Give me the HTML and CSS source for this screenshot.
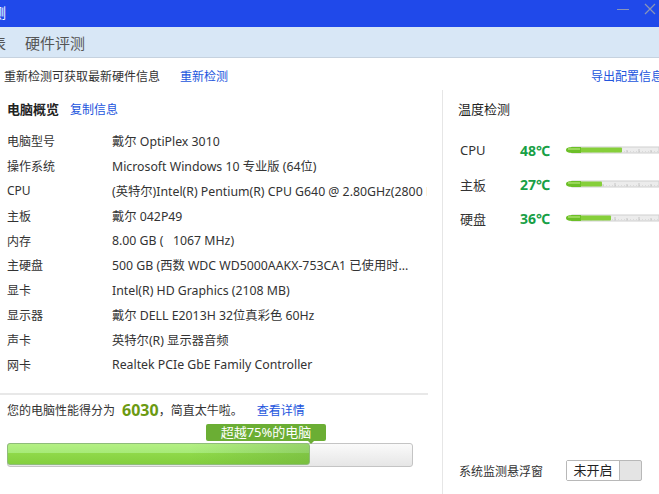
FILE: index.html
```html
<!DOCTYPE html>
<html lang="zh-CN">
<head>
    <meta charset="UTF-8">
    <title>硬件评测</title>
    <link rel="stylesheet" href="styles.css">
</head>
<body>
    <div class="titulo">
        <span class="titulo-texto">检测</span>
        <div class="ventana">
            <span class="minimizar"></span>
            <svg class="cerrar" width="12" height="12" viewBox="0 0 12 12"><path d="M1 1L11 11M11 1L1 11" stroke="#8a95b8" stroke-width="1.2"/></svg>
        </div>
    </div>
    <div class="pestanas">
        <span class="pestana cortada">硬件概表</span>
        <span class="pestana">硬件评测</span>
    </div>
    <div class="barra">
        <span>重新检测可获取最新硬件信息</span>
        <a class="enlace recheck">重新检测</a>
        <a class="enlace exportar">导出配置信息</a>
    </div>
    <div class="principal">
        <div class="izquierda">
            <div class="cabecera"><b>电脑概览</b><a class="enlace">复制信息</a></div>
            <div class="fila"><span class="clave">电脑型号</span><span class="valor">戴尔 OptiPlex 3010</span></div>
            <div class="fila"><span class="clave">操作系统</span><span class="valor">Microsoft Windows 10 专业版 (64位)</span></div>
            <div class="fila"><span class="clave">CPU</span><span class="valor">(英特尔)Intel(R) Pentium(R) CPU G640 @ 2.80GHz(2800 MHz)</span></div>
            <div class="fila"><span class="clave">主板</span><span class="valor">戴尔 042P49</span></div>
            <div class="fila"><span class="clave">内存</span><span class="valor">8.00 GB ( &nbsp; 1067 MHz)</span></div>
            <div class="fila"><span class="clave">主硬盘</span><span class="valor">500 GB (西数 WDC WD5000AAKX-753CA1 已使用时...</span></div>
            <div class="fila"><span class="clave">显卡</span><span class="valor">Intel(R) HD Graphics (2108 MB)</span></div>
            <div class="fila"><span class="clave">显示器</span><span class="valor">戴尔 DELL E2013H 32位真彩色 60Hz</span></div>
            <div class="fila"><span class="clave">声卡</span><span class="valor">英特尔(R) 显示器音频</span></div>
            <div class="fila"><span class="clave">网卡</span><span class="valor">Realtek PCIe GbE Family Controller</span></div>

            <div class="puntos">
                <span>您的电脑性能得分为</span><b class="nota">6030</b><span>，简直太牛啦。</span>
                <a class="enlace">查看详情</a>
            </div>
            <div class="progreso">
                <div class="relleno" style="width: 75%"></div>
                <span class="globo">超越75%的电脑</span>
            </div>
        </div>
        <div class="derecha">
            <div class="cabecera">温度检测</div>
            <div class="temp"><span class="clave">CPU</span><b class="grados">48℃</b>
                <svg class="termo" width="94" height="12" viewBox="0 0 94 12">
                    <rect x="7" y="3" width="87" height="6" fill="#ececec" stroke="#cfcfcf"/>
                    <path d="M14 7.5h80" stroke="#b8b8b8" stroke-width="0.6" stroke-dasharray="0.6 2.4"/>
                    <path d="M14 8.5V6M26 8.5V5M38 8.5V6M50 8.5V5M62 8.5V6M74 8.5V5M86 8.5V6" stroke="#b0b0b0" stroke-width="0.6"/>
                    <rect x="8" y="3.5" width="49" height="5" rx="1" fill="#86cf3a"/>
                    <path d="M1 6c0-2.3 3-3 7-3h8v6H8C4 9 1 8.3 1 6z" fill="#6cbf28"/>
                    <path d="M3 5h12" stroke="#c6f08a" stroke-width="1"/>
                </svg>
            </div>
            <div class="temp"><span class="clave">主板</span><b class="grados">27℃</b>
                <svg class="termo" width="94" height="12" viewBox="0 0 94 12">
                    <rect x="7" y="3" width="87" height="6" fill="#ececec" stroke="#cfcfcf"/>
                    <path d="M14 7.5h80" stroke="#b8b8b8" stroke-width="0.6" stroke-dasharray="0.6 2.4"/>
                    <path d="M14 8.5V6M26 8.5V5M38 8.5V6M50 8.5V5M62 8.5V6M74 8.5V5M86 8.5V6" stroke="#b0b0b0" stroke-width="0.6"/>
                    <rect x="8" y="3.5" width="29" height="5" rx="1" fill="#86cf3a"/>
                    <path d="M1 6c0-2.3 3-3 7-3h8v6H8C4 9 1 8.3 1 6z" fill="#6cbf28"/>
                    <path d="M3 5h12" stroke="#c6f08a" stroke-width="1"/>
                </svg>
            </div>
            <div class="temp"><span class="clave">硬盘</span><b class="grados">36℃</b>
                <svg class="termo" width="94" height="12" viewBox="0 0 94 12">
                    <rect x="7" y="3" width="87" height="6" fill="#ececec" stroke="#cfcfcf"/>
                    <path d="M14 7.5h80" stroke="#b8b8b8" stroke-width="0.6" stroke-dasharray="0.6 2.4"/>
                    <path d="M14 8.5V6M26 8.5V5M38 8.5V6M50 8.5V5M62 8.5V6M74 8.5V5M86 8.5V6" stroke="#b0b0b0" stroke-width="0.6"/>
                    <rect x="8" y="3.5" width="38" height="5" rx="1" fill="#86cf3a"/>
                    <path d="M1 6c0-2.3 3-3 7-3h8v6H8C4 9 1 8.3 1 6z" fill="#6cbf28"/>
                    <path d="M3 5h12" stroke="#c6f08a" stroke-width="1"/>
                </svg>
            </div>
            <div class="flotante">
                <span>系统监测悬浮窗</span>
                <div class="interruptor"><span class="estado">未开启</span><span class="pomo"></span></div>
            </div>
        </div>
    </div>
</body>
</html>
```

FILE: styles.css
```css
*{
    margin: 0;
    padding: 0;
    box-sizing: border-box;
}
body{
    width: 659px;
    height: 494px;
    overflow: hidden;
    background: white;
    font-family: "Noto Sans", "Noto Sans CJK SC", sans-serif;
    font-size: 12px;
    color: #333;
}
.titulo{
    height: 27px;
    background: #2049ea;
    display: flex;
    align-items: center;
    justify-content: space-between;
}
.titulo-texto{
    color: white;
    font-size: 14px;
    margin-left: -22px;
    margin-top: -4px;
}
.ventana{
    display: flex;
    align-items: center;
    gap: 15px;
    margin-right: 3px;
    margin-top: -9px;
}
.minimizar{
    width: 12px;
    height: 1px;
    background: #8a95b8;
}
.pestanas{
    height: 31px;
    background: #d8e7f6;
    border-bottom: 1px solid #c6d2df;
    display: flex;
    align-items: center;
    gap: 19px;
}
.pestana{
    font-size: 15px;
    color: #555;
}
.cortada{
    margin-left: -54px;
}
.barra{
    height: 32px;
    padding-top: 4px;
    display: flex;
    align-items: center;
    padding-left: 4px;
    white-space: nowrap;
}
.enlace{
    color: #2255dd;
    cursor: pointer;
}
.recheck{
    margin-left: 20px;
}
.exportar{
    margin-left: auto;
    margin-right: -4px;
}
.principal{
    display: flex;
    height: 404px;
}
.izquierda{
    width: 443px;
    border-right: 1px solid #e6e6e6;
    padding-left: 7px;
    white-space: nowrap;
}
.cabecera{
    height: 37px;
    display: flex;
    align-items: center;
    gap: 11px;
    font-size: 13px;
    color: #222;
}
.izquierda .cabecera{
    margin-bottom: 2px;
}
.cabecera b{
    font-weight: bold;
}
.cabecera .enlace{
    font-size: 12px;
}
.fila{
    display: flex;
    height: 24.8px;
    align-items: center;
    overflow: hidden;
    width: 420px;
}
.clave{
    width: 105px;
    flex-shrink: 0;
}
.valor{
    font-size: 12.3px;
}
.puntos{
    margin-top: 16px;
    margin-left: -7px;
    padding-left: 7px;
    width: 428px;
    border-top: 2px solid #e8e8e8;
    height: 33px;
    display: flex;
    align-items: center;
}
.nota{
    color: #6b9a12;
    font-size: 16px;
    margin-left: 7px;
}
.puntos .enlace{
    margin-left: 14px;
}
.progreso{
    position: relative;
    margin-top: 17px;
    width: 406px;
    height: 24px;
    border: 1px solid #c4c4c4;
    border-radius: 3px;
    background: linear-gradient(#fafafa, #e6e6e6);
}
.relleno{
    height: 100%;
    border: 1px solid #8fbc7a;
    border-radius: 3px;
    background: linear-gradient(90deg, rgba(255,255,255,0) 60%, rgba(100,160,60,0.35)),
        linear-gradient(#b4f084 0, #a6ea78 45%, #8fd94a 46%, #84cf3f 100%);
    margin: -1px;
}
.globo{
    position: absolute;
    left: 198px;
    top: -20px;
    width: 120px;
    height: 17px;
    background: #6bae34;
    color: white;
    border-radius: 2px;
    text-align: center;
    font-size: 13px;
    line-height: 17px;
}
.globo::after{
    content: "";
    position: absolute;
    left: 102px;
    top: 17px;
    border: 3px solid transparent;
    border-top-color: #6bae34;
}
.derecha{
    flex: 1;
    padding-left: 15px;
    display: flex;
    flex-direction: column;
}
.derecha .cabecera{
    height: 37px;
    margin-bottom: 6px;
}
.temp{
    display: flex;
    align-items: center;
    height: 34px;
    padding-left: 2px;
    font-size: 13px;
}
.temp .clave{
    width: 60px;
}
.grados{
    color: #18a046;
    font-size: 14px;
    width: 45px;
}
.termo{
    flex-shrink: 0;
}
.flotante{
    margin-top: auto;
    margin-bottom: 13px;
    display: flex;
    align-items: center;
    padding-left: 1px;
}
.interruptor{
    margin-left: 23px;
    width: 76px;
    height: 21px;
    border: 1px solid #b8b8b8;
    border-radius: 2px;
    display: flex;
    background: #e4e4e4;
}
.estado{
    width: 53px;
    background: white;
    border-right: 1px solid #b8b8b8;
    text-align: center;
    line-height: 19px;
    color: #222;
    font-size: 13px;
}
```
